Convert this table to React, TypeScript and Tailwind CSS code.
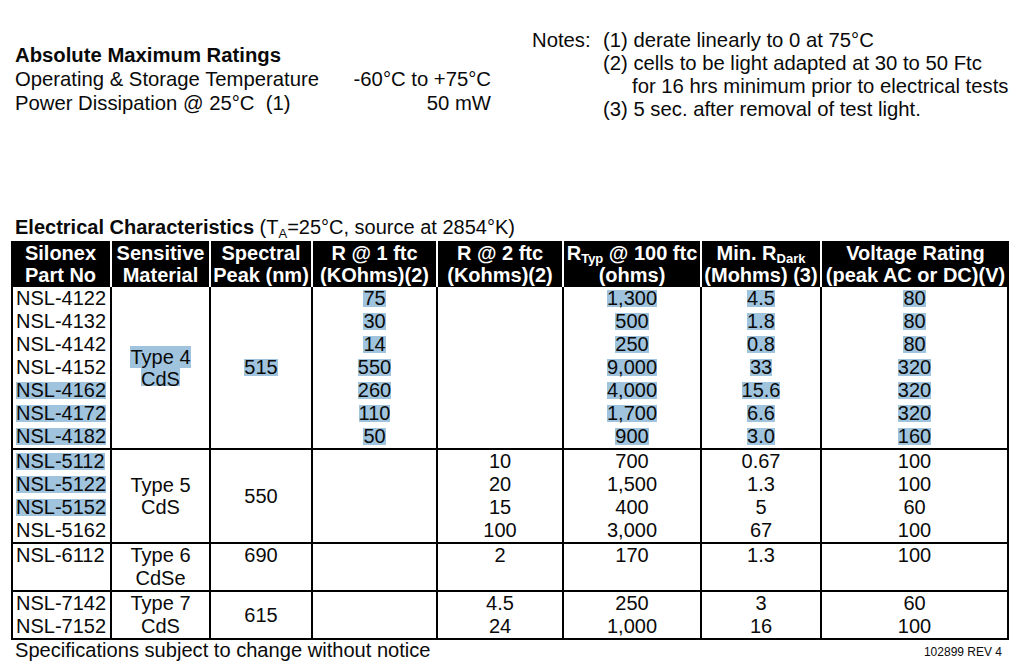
import React from "react";

const HL = "bg-[#a0c4de]";
const COLS = "grid grid-cols-[99px_99px_102px_125px_126px_138px_120px_189px]";

type Group = {
  parts: { name: string; hl?: boolean }[];
  material: string[];
  matHl?: boolean;
  matMode: "center" | "top" | "fill";
  peak: string;
  peakHl?: boolean;
  peakTop?: boolean;
  r1: string[];
  r2: string[];
  rtyp: string[];
  rdark: string[];
  volt: string[];
  hl?: boolean;
};

const groups: Group[] = [
  {
    parts: [
      { name: "NSL-4122" },
      { name: "NSL-4132" },
      { name: "NSL-4142" },
      { name: "NSL-4152" },
      { name: "NSL-4162", hl: true },
      { name: "NSL-4172", hl: true },
      { name: "NSL-4182", hl: true },
    ],
    material: ["Type 4", "CdS"],
    matHl: true,
    matMode: "center",
    peak: "515",
    peakHl: true,
    r1: ["75", "30", "14", "550", "260", "110", "50"],
    r2: [],
    rtyp: ["1,300", "500", "250", "9,000", "4,000", "1,700", "900"],
    rdark: ["4.5", "1.8", "0.8", "33", "15.6", "6.6", "3.0"],
    volt: ["80", "80", "80", "320", "320", "320", "160"],
    hl: true,
  },
  {
    parts: [
      { name: "NSL-5112", hl: true },
      { name: "NSL-5122", hl: true },
      { name: "NSL-5152", hl: true },
      { name: "NSL-5162" },
    ],
    material: ["Type 5", "CdS"],
    matMode: "center",
    peak: "550",
    r1: [],
    r2: ["10", "20", "15", "100"],
    rtyp: ["700", "1,500", "400", "3,000"],
    rdark: ["0.67", "1.3", "5", "67"],
    volt: ["100", "100", "60", "100"],
  },
  {
    parts: [{ name: "NSL-6112" }],
    material: ["Type 6", "CdSe"],
    matMode: "top",
    peak: "690",
    peakTop: true,
    r1: [],
    r2: ["2"],
    rtyp: ["170"],
    rdark: ["1.3"],
    volt: ["100"],
  },
  {
    parts: [{ name: "NSL-7142" }, { name: "NSL-7152" }],
    material: ["Type 7", "CdS"],
    matMode: "fill",
    peak: "615",
    r1: [],
    r2: ["4.5", "24"],
    rtyp: ["250", "1,000"],
    rdark: ["3", "16"],
    volt: ["60", "100"],
  },
];

const Val = ({ v, hl }: { v: string; hl?: boolean }) => (
  <div className="h-[23px] leading-[23px] whitespace-nowrap">
    {hl ? <span className={`inline-block leading-[17px] ${HL}`}>{v}</span> : v}
  </div>
);

const ValueCol = ({ vals, hl, last }: { vals: string[]; hl?: boolean; last?: boolean }) => (
  <div className={`border-l-2 border-black text-center ${last ? "border-r-2" : ""}`}>
    {vals.map((v, i) => (
      <Val key={i} v={v} hl={hl} />
    ))}
  </div>
);

const GroupRow = ({ g }: { g: Group }) => (
  <div className={`${COLS} border-b-2 border-black`}>
    {/* part numbers */}
    <div className="border-l-2 border-black pl-[3px]">
      {g.parts.map((p) => (
        <Val key={p.name} v={p.name} hl={p.hl} />
      ))}
    </div>

    {/* material */}
    <div
      className={`border-l-2 border-black text-center flex flex-col ${
        g.matMode === "center" ? "justify-center" : "justify-start"
      }`}
    >
      {g.matHl ? (
        <>
          <div className="leading-[22px]">
            <span className={`inline-block leading-[22px] ${HL}`}>{g.material[0]}</span>
          </div>
          <div className="leading-[22px]">
            <span className={`inline-block h-[18px] leading-[22px] align-top ${HL}`}>{g.material[1]}</span>
          </div>
        </>
      ) : (
        g.material.map((m) => (
          <div key={m} className={g.matMode === "center" ? "leading-[22px]" : "leading-[23px]"}>
            {m}
          </div>
        ))
      )}
    </div>

    {/* spectral peak */}
    <div
      className={`border-l-2 border-black text-center flex flex-col ${
        g.peakTop ? "justify-start" : "justify-center"
      }`}
    >
      <Val v={g.peak} hl={g.peakHl} />
    </div>

    <ValueCol vals={g.r1} hl={g.hl} />
    <ValueCol vals={g.r2} />
    <ValueCol vals={g.rtyp} hl={g.hl} />
    <ValueCol vals={g.rdark} hl={g.hl} />
    <ValueCol vals={g.volt} hl={g.hl} last />
  </div>
);

const headCell = "bg-black text-white font-bold text-center leading-[22px] py-[1px] whitespace-nowrap";

export default function App() {
  return (
    <div className="w-[1026px] h-[668px] bg-white text-[#0a0a0a] overflow-hidden text-[20px] font-['Liberation_Sans',Arial,sans-serif]">
      {/* Ratings + notes */}
      <div className="flex items-start h-[216px] text-[20.3px]">
        <div className="mt-[43px] ml-[15px] w-[476px] grid grid-cols-[1fr_auto] leading-[24px] whitespace-nowrap">
          <div className="col-span-2 font-bold">Absolute Maximum Ratings</div>
          <div>Operating &amp; Storage Temperature</div>
          <div className="text-right">-60°C to +75°C</div>
          <div>Power Dissipation @ 25°C&nbsp; (1)</div>
          <div className="text-right">50 mW</div>
        </div>
        <div className="mt-[29px] ml-[41px] flex leading-[23px] whitespace-nowrap">
          <div className="w-[71px]">Notes:</div>
          <div>
            <div>(1) derate linearly to 0 at 75°C</div>
            <div>(2) cells to be light adapted at 30 to 50 Ftc</div>
            <div className="pl-[29px]">for 16 hrs minimum prior to electrical tests</div>
            <div>(3) 5 sec. after removal of test light.</div>
          </div>
        </div>
      </div>

      {/* Electrical characteristics */}
      <div className="ml-[15px] h-[23px] leading-[23px] mb-[2px] whitespace-nowrap">
        <span className="font-bold">Electrical Characteristics</span> (T
        <span className="relative top-[4px] text-[13px] leading-none">A</span>
        =25°C, source at 2854°K)
      </div>

      <div className="ml-[11px] w-[998px]">
        <div className={COLS}>
          <div className={headCell}>
            <div>Silonex</div>
            <div>Part No</div>
          </div>
          <div className={`${headCell} border-l-2 border-white`}>
            <div>Sensitive</div>
            <div>Material</div>
          </div>
          <div className={`${headCell} border-l-2 border-white`}>
            <div>Spectral</div>
            <div>Peak (nm)</div>
          </div>
          <div className={`${headCell} border-l-2 border-white`}>
            <div>R @ 1 ftc</div>
            <div>(KOhms)(2)</div>
          </div>
          <div className={`${headCell} border-l-2 border-white`}>
            <div>R @ 2 ftc</div>
            <div>(Kohms)(2)</div>
          </div>
          <div className={`${headCell} border-l-2 border-white`}>
            <div>
              R<span className="relative top-[3px] text-[13px] leading-none">Typ</span> @ 100 ftc
            </div>
            <div>(ohms)</div>
          </div>
          <div className={`${headCell} border-l-2 border-white`}>
            <div>
              Min. R<span className="relative top-[3px] text-[13px] leading-none">Dark</span>
            </div>
            <div>(Mohms) (3)</div>
          </div>
          <div className={`${headCell} border-l-2 border-white`}>
            <div>Voltage Rating</div>
            <div>(peak AC or DC)(V)</div>
          </div>
        </div>

        {groups.map((g, i) => (
          <GroupRow key={i} g={g} />
        ))}
      </div>

      {/* footer */}
      <div className="flex justify-between items-start whitespace-nowrap">
        <div className="ml-[15px] leading-[20px] text-[20.1px]">Specifications subject to change without notice</div>
        <div className="mr-[24px] pt-[2px] text-[12px] leading-[20px]">102899 REV 4</div>
      </div>
    </div>
  );
}
